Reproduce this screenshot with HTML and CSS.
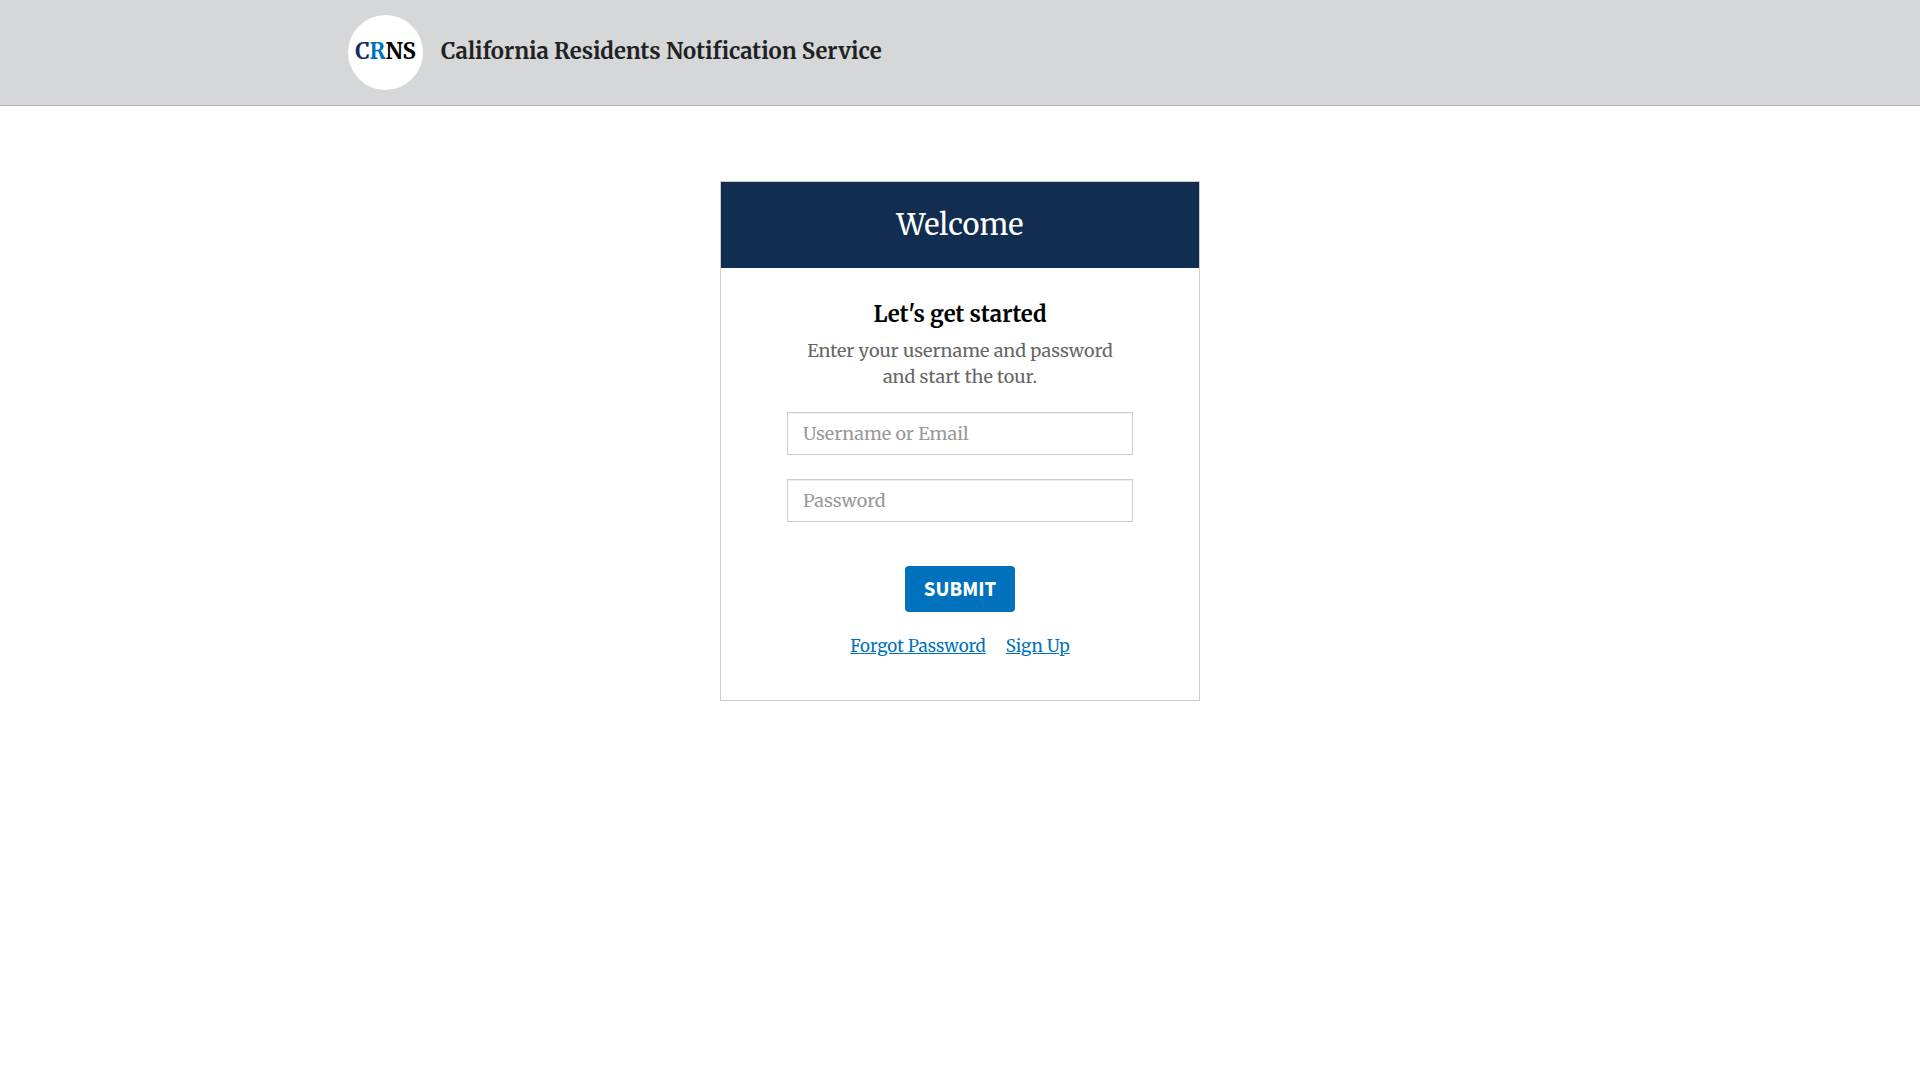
FILE: index.html
```html
<!DOCTYPE html>
<html lang="en">
<head>
<meta charset="utf-8">
<meta name="viewport" content="width=device-width, initial-scale=1">
<title>California Residents Notification Service</title>
<link rel="stylesheet" href="styles.css">
</head>
<body>
<header class="site-header">
  <div class="site-header-inner">
    <div class="logo"><span class="logo-c">C</span><span class="logo-r">R</span>NS</div>
    <h1 class="site-title">California Residents Notification Service</h1>
  </div>
</header>
<main class="main">
  <section class="card">
    <h2 class="card-title">Welcome</h2>
    <form class="login">
      <h3 class="login-title">Let's get started</h3>
      <p class="login-intro">Enter your username and password<br>and start the tour.</p>
      <input class="field" type="text" placeholder="Username or Email" aria-label="Username or Email">
      <input class="field" type="password" placeholder="Password" aria-label="Password">
      <button class="submit" type="submit">SUBMIT</button>
      <nav class="links">
        <a href="#forgot">Forgot Password</a>
        <a href="#signup">Sign Up</a>
      </nav>
    </form>
  </section>
</main>
</body>
</html>
```
FILE: styles.css
```css
* { box-sizing: border-box; }
body {
  margin: 0;
  background: #fff;
  color: #000;
  font-family: Merriweather, "DejaVu Serif Condensed", "DejaVu Serif", serif;
}
h1, h2, h3, p { margin: 0; }
.site-header {
  padding: 15px 24px;
  background: #d6d7d9;
  border-bottom: 1px solid #aeb0b5;
}
.site-header-inner {
  display: flex;
  align-items: center;
  gap: 18px;
  max-width: 1224px;
  margin: 0 auto;
}
.logo {
  flex: none;
  width: 75px;
  height: 75px;
  border-radius: 50%;
  background: #fff;
  font-size: 22px;
  font-weight: 700;
  line-height: 72px;
  text-align: center;
}
.logo-c { color: #112e6b; }
.logo-r { color: #0071bc; }
.site-title {
  padding-bottom: 4px;
  color: #212121;
  font-size: 22px;
  font-weight: 700;
  line-height: 32px;
}
.main { padding: 75px 16px 32px; }
.card {
  max-width: 480px;
  margin: 0 auto;
  border: 1px solid #ccc;
}
.card-title {
  padding: 22px 16px;
  background: #112e51;
  color: #fff;
  font-size: 29px;
  font-weight: 400;
  line-height: 42px;
  text-align: center;
}
.login {
  display: flex;
  flex-direction: column;
  align-items: center;
  padding: 30px 66px 40px;
  text-align: center;
}
.login-title {
  margin-bottom: 8px;
  font-size: 22px;
  line-height: 32px;
}
.login-intro {
  margin-bottom: 22px;
  color: #666;
  font-size: 18px;
  line-height: 26px;
}
.field {
  width: 100%;
  height: 43px;
  margin-bottom: 24px;
  padding: 6px 15px;
  border: 1px solid #ccc;
  background: #fff;
  box-shadow: inset 0 1px 1px rgba(0, 0, 0, .075);
  color: #555;
  font: inherit;
  font-size: 18px;
}
.field::placeholder { color: #999; opacity: 1; }
.submit {
  width: 110px;
  height: 46px;
  margin: 20px 0;
  padding: 0;
  border: 0;
  border-radius: 4px;
  background: #0071bc;
  color: #fff;
  font-family: "Source Sans 3", "Open Sans", sans-serif;
  font-size: 21px;
  font-weight: 700;
}
.links {
  display: flex;
  gap: 20px;
  font-size: 17px;
  line-height: 28px;
}
.links a { color: #0071bc; }
```
